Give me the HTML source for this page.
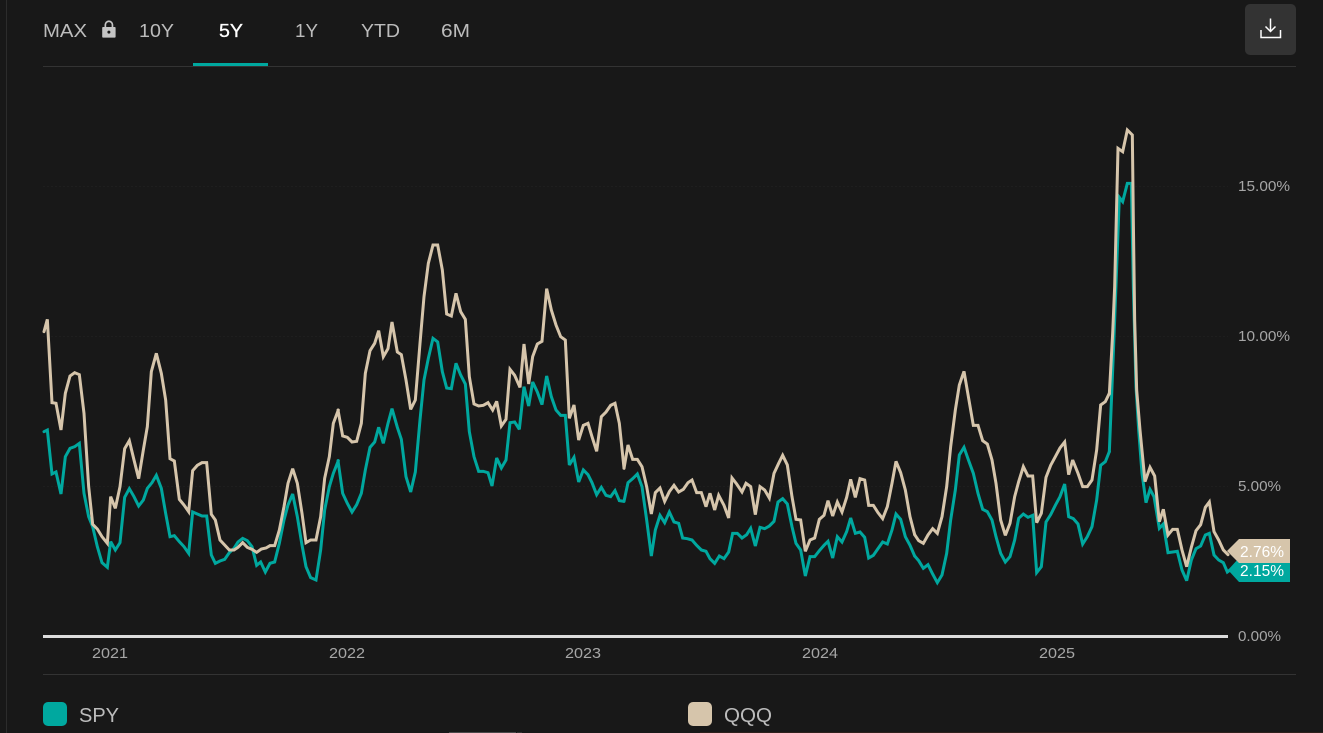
<!DOCTYPE html>
<html><head><meta charset="utf-8"><style>
html,body{margin:0;padding:0;background:#181818;width:1323px;height:733px;overflow:hidden}
svg{display:block;position:absolute;left:0;top:0}
text{font-family:"Liberation Sans",sans-serif}
</style></head><body>
<svg width="1323" height="733" viewBox="0 0 1323 733" xmlns="http://www.w3.org/2000/svg">
<rect width="1323" height="733" fill="#181818"/>
<rect x="6" y="0" width="1" height="733" fill="#2c2c2c"/>
<rect x="449" y="732" width="67" height="1" fill="#4a4a4a"/><rect x="517" y="732" width="5" height="1" fill="#333"/>
<rect x="700" y="732" width="623" height="1" fill="#2e201c"/>

<!-- tabs -->
<g font-size="18" fill="#bcbcbc">
<text x="43" y="37" textLength="44" lengthAdjust="spacingAndGlyphs">MAX</text>
<text x="139" y="37" textLength="35" lengthAdjust="spacingAndGlyphs">10Y</text>
<text x="219" y="37" textLength="24" lengthAdjust="spacingAndGlyphs" fill="#fff" stroke="#fff" stroke-width=".3">5Y</text>
<text x="295" y="37" textLength="23" lengthAdjust="spacingAndGlyphs">1Y</text>
<text x="361" y="37" textLength="39" lengthAdjust="spacingAndGlyphs">YTD</text>
<text x="441" y="37" textLength="29" lengthAdjust="spacingAndGlyphs">6M</text>
</g>
<path fill-rule="evenodd" fill="#c4c4c4" d="M103 27h1.5v-2.2a4.4 4.4 0 0 1 8.8 0V27h1.5a.8.8 0 0 1 .8.8v9a.8.8 0 0 1-.8.8h-11.8a.8.8 0 0 1-.8-.8v-9a.8.8 0 0 1 .8-.8zM106.2 27h5.4v-2.2a2.7 2.7 0 0 0-5.4 0zM108.9 30.6a1.5 1.5 0 1 0 0 3 1.5 1.5 0 0 0 0-3z"/>
<rect x="43" y="66" width="1253" height="1" fill="#333"/>
<rect x="193" y="63" width="75" height="3" fill="#00a89f"/>
<rect x="1245" y="4" width="51" height="51" rx="5" fill="#333"/>
<path d="M1270.5 18.500V31M1265.500 26.500l5 5 5-5M1261 30v7.500h19.500V30" fill="none" stroke="#fff" stroke-width="1.500"/>

<!-- grid -->
<g stroke="#1e1e1e" stroke-width="1" stroke-dasharray="2 2">
<line x1="43" x2="1228" y1="186.500" y2="186.500"/>
<line x1="43" x2="1228" y1="336.500" y2="336.500"/>
<line x1="43" x2="1228" y1="486.500" y2="486.500"/>
</g>
<rect x="43" y="635" width="1185" height="3" fill="#dcdcdc"/>

<!-- SPY -->
<g fill="none" stroke="#00a89f" stroke-width="9" stroke-linejoin="miter" stroke-miterlimit="3" stroke-linecap="round">
<polyline transform="translate(40 230) scale(.33333)" points="12,605 22,600 36,732 48,726 63,792 76,680 90,655 104,650 118,640 132,790 146,860 158,890 172,950 186,998 202,1012 212,935 226,960 240,938 254,802 268,776 282,800 296,828 310,810 322,775 336,758 349,736 364,775 377,850 390,920 403,917 418,935 432,950 446,970 458,846 472,852 486,858 500,858 514,975 526,1000 540,993 554,988 568,968 582,955 594,936 608,925 622,932 636,950 650,1006 662,996 676,1026 690,1000 704,996 718,940 732,870 744,825 758,792 772,860 786,945 798,1010 812,1043 828,1050 842,960 854,840 868,770 880,730 895,692"/>
<polyline transform="translate(330 230) scale(.33333)" points="24,692 38,790 52,820 66,846 80,824 94,790 106,720 120,652 134,636 146,592 160,640 174,580 186,536 202,592 214,628 228,740 242,786 256,726 270,570 282,450 295,385 309,325 323,336 337,425 350,474 364,476 378,400 392,435 406,462 418,605 432,680 446,724 460,724 474,728 486,768 500,684 514,714 528,690 540,578 554,576 568,598 582,470 596,528 608,456 622,486 636,524 650,438 664,500 678,540 692,556 706,556 718,705 732,682 746,756 760,720 774,734 786,758 800,794 814,772 828,796 842,800 855,782 868,812 882,814"/>
<polyline transform="translate(620 340) scale(.33333)" points="12,484 24,428 38,416 52,402 66,440 80,540 94,648 106,570 120,526 134,548 148,516 162,546 176,550 188,594 202,596 216,600 230,616 244,630 258,634 270,656 284,670 298,648 312,656 326,636 338,580 352,580 366,594 380,584 392,565 406,618 420,562 434,566 448,558 462,544 474,486 488,476 502,492 516,560 528,610 542,630 556,708 570,650 584,650 598,632 612,616 624,604 638,654 652,590 666,606 680,575 692,534 706,580 720,576 734,592 746,654 760,646 774,626 788,606 802,612 816,570 828,522 842,538 856,590 870,616 884,648"/>
<polyline transform="translate(910 340) scale(.33333)" points="14,648 26,662 40,685 54,674 68,702 82,728 96,705 110,640 122,540 136,450 148,345 162,322 176,362 190,400 204,460 218,508 232,515 246,540 258,590 272,640 286,666 300,650 314,600 326,535 340,522 354,532 368,526 380,698 394,680 408,546 422,524 436,496 450,470 464,432 476,530 490,536 504,552 518,612 532,590 546,560 560,480 572,376 586,365 598,335"/>
<polyline transform="translate(1090 120) scale(.33333)" points="58,995 66,800 74,600 88,232 98,245 112,190 124,190 130,500 138,800 146,930 156,1060 168,1148 180,1108 192,1130 208,1225 220,1212 234,1298 248,1296 262,1294 276,1350 290,1382 304,1320 318,1286 332,1278 346,1245 358,1240 372,1305 386,1320 400,1328 412,1356 420,1350"/>
</g>
<!-- QQQ -->
<g fill="none" stroke="#d6c5ab" stroke-width="9" stroke-linejoin="miter" stroke-miterlimit="3" stroke-linecap="round">
<polyline transform="translate(40 230) scale(.33333)" points="12,305 22,268 36,518 48,520 63,600 76,490 90,438 104,428 118,434 132,550 146,770 158,883 172,897 186,920 202,940 212,800 226,835 240,770 254,656 268,632 282,690 296,746 310,660 322,590 334,425 349,370 364,430 377,510 390,686 403,693 418,808 432,825 446,845 458,722 472,706 486,698 500,698 514,853 526,870 540,930 554,945 568,960 582,960 594,952 608,938 622,952 636,958 650,967 664,957 678,954 690,947 704,947 718,900 732,830 744,760 758,716 772,760 786,850 798,938 812,930 828,930 842,860 854,745 868,680 880,580 895,540"/>
<polyline transform="translate(330 230) scale(.33333)" points="24,540 38,618 52,622 66,636 80,634 94,580 106,430 120,362 134,340 146,302 160,380 174,356 186,276 202,366 214,374 228,450 242,538 256,510 270,340 282,200 295,100 309,45 323,45 337,120 350,252 364,258 378,190 392,245 406,268 418,440 432,522 446,528 460,526 474,518 488,540 500,514 514,588 528,568 540,418 554,436 570,472 582,342 596,462 608,380 622,342 636,334 650,176 664,240 678,285 692,320 706,330 718,565 732,525 746,630 760,586 774,580 786,620 800,664 814,560 828,546 842,526 855,520 868,580 882,714"/>
<polyline transform="translate(620 340) scale(.33333)" points="12,385 24,315 38,358 52,358 66,380 80,440 94,522 106,458 120,444 134,484 148,455 162,436 176,456 190,448 204,428 216,420 230,458 244,458 258,500 270,460 284,510 296,466 312,496 326,534 336,414 350,432 366,456 378,430 392,440 406,524 420,440 434,450 448,474 462,400 476,370 488,346 502,375 516,470 528,538 542,540 556,634 570,600 584,594 598,538 612,526 624,482 638,528 652,486 666,516 680,472 692,418 706,472 720,416 734,420 746,496 760,496 774,518 788,536 802,500 816,430 828,364 842,398 856,450 870,530 884,584"/>
<polyline transform="translate(910 340) scale(.33333)" points="14,584 26,602 40,610 54,585 68,566 82,580 96,530 110,440 122,320 136,210 148,135 162,94 176,175 190,256 204,256 218,302 232,312 246,360 258,430 272,540 286,586 300,550 314,470 326,425 340,380 354,408 368,408 380,548 394,520 408,412 422,376 436,350 450,324 464,306 476,404 488,360 504,400 518,440 532,440 546,420 560,330 572,195 586,185 598,160"/>
<polyline transform="translate(1090 120) scale(.33333)" points="58,822 68,640 74,500 84,85 98,95 112,30 127,45 130,300 134,600 140,810 150,930 165,1085 180,1042 194,1068 208,1205 220,1168 234,1245 248,1228 262,1228 276,1290 290,1340 304,1282 318,1232 332,1214 346,1162 358,1146 372,1235 386,1260 400,1290 414,1304"/>
</g>

<!-- axis labels -->
<g font-size="15" fill="#a6a6a6">
<text x="1238" y="191" textLength="52" lengthAdjust="spacingAndGlyphs">15.00%</text>
<text x="1238" y="341" textLength="52" lengthAdjust="spacingAndGlyphs">10.00%</text>
<text x="1238" y="491" textLength="43" lengthAdjust="spacingAndGlyphs">5.00%</text>
<text x="1238" y="641" textLength="43" lengthAdjust="spacingAndGlyphs">0.00%</text>
<text x="92" y="658" textLength="36" lengthAdjust="spacingAndGlyphs">2021</text>
<text x="329" y="658" textLength="36" lengthAdjust="spacingAndGlyphs">2022</text>
<text x="565" y="658" textLength="36" lengthAdjust="spacingAndGlyphs">2023</text>
<text x="802" y="658" textLength="36" lengthAdjust="spacingAndGlyphs">2024</text>
<text x="1039" y="658" textLength="36" lengthAdjust="spacingAndGlyphs">2025</text>
</g>

<!-- price tags -->
<path d="M1228 570L1239 558H1290V582H1239Z" fill="#00a89f"/>
<path d="M1227 551L1239 539H1290V563H1239Z" fill="#d6c5ab"/>
<g font-size="15.500" fill="#fff">
<text x="1240" y="557" textLength="44" lengthAdjust="spacingAndGlyphs">2.76%</text>
<text x="1240" y="576" textLength="44" lengthAdjust="spacingAndGlyphs">2.15%</text>
</g>

<rect x="43" y="674" width="1253" height="1" fill="#333"/>

<!-- legend -->
<rect x="43" y="702" width="24" height="24" rx="5" fill="#00a89f"/>
<text x="79" y="722" font-size="20" fill="#bcbcbc" textLength="40" lengthAdjust="spacingAndGlyphs">SPY</text>
<rect x="688" y="702" width="24" height="24" rx="5" fill="#d6c5ab"/>
<text x="724" y="722" font-size="20" fill="#bcbcbc" textLength="48" lengthAdjust="spacingAndGlyphs">QQQ</text>
</svg>
</body></html>
